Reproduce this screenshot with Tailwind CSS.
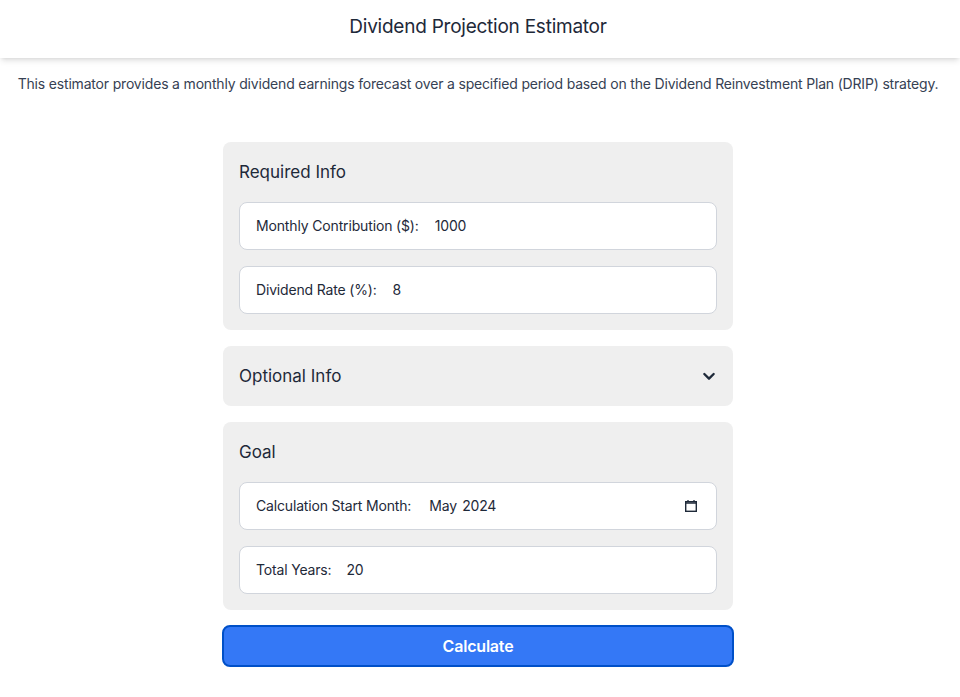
<!DOCTYPE html>
<html lang="en">
<head>
    <meta charset="UTF-8">
    <meta name="viewport" content="width=device-width, initial-scale=1.0">
    <title>Dividend Projection Estimator</title>
    <script src="https://cdn.jsdelivr.net/npm/@tailwindcss/browser@4"></script>
</head>
<body class="bg-white font-['Inter',sans-serif] text-gray-800">
    <!--Header-->
    <header class="h-[58px] flex items-center justify-center pr-1 pb-1 bg-white shadow-md">
        <h1 class="text-[19px] leading-7 tracking-[-0.24px] text-gray-800">Dividend Projection Estimator</h1>
    </header>

    <div class="pr-1">
        <p class="mt-4 text-sm leading-5 tracking-[-0.18px] text-center text-gray-700">This estimator provides a monthly dividend earnings forecast over a specified period based on the Dividend Reinvestment Plan (DRIP) strategy.</p>

        <!--Form-->
        <form class="w-[510px] mx-auto mt-[48px] flex flex-col gap-4">
            <section class="bg-[#efefef] rounded-lg p-4 flex flex-col gap-4">
                <h2 class="text-[17px] leading-7">Required Info</h2>
                <label class="h-12 flex items-center px-4 bg-white border border-gray-300 rounded-lg text-sm tracking-[-0.15px]">
                    <span class="mr-4">Monthly Contribution ($):</span>
                    <input type="number" value="1000" class="flex-1 outline-none [appearance:textfield]">
                </label>
                <label class="h-12 flex items-center px-4 bg-white border border-gray-300 rounded-lg text-sm tracking-[-0.17px]">
                    <span class="mr-4">Dividend Rate (%):</span>
                    <input type="number" value="8" class="flex-1 outline-none [appearance:textfield]">
                </label>
            </section>

            <section class="h-[60px] bg-[#efefef] rounded-lg px-4 flex items-center justify-between">
                <h2 class="text-[17px] leading-7">Optional Info</h2>
                <svg class="w-4 h-4 text-gray-800" fill="none" stroke="currentColor" viewBox="0 0 24 24" xmlns="http://www.w3.org/2000/svg">
                    <path stroke-linecap="round" stroke-linejoin="round" stroke-width="3.5" d="M5 9l7 7 7-7"></path>
                </svg>
            </section>

            <section class="bg-[#efefef] rounded-lg p-4 flex flex-col gap-4">
                <h2 class="text-[17px] leading-7">Goal</h2>
                <label class="h-12 flex items-center pl-4 pr-[19px] bg-white border border-gray-300 rounded-lg text-sm tracking-[-0.17px]">
                    <span class="mr-[18px]">Calculation Start Month:</span>
                    <input type="text" value="May 2024" class="flex-1 outline-none [word-spacing:1.5px]">
                    <svg class="w-3 h-3 text-gray-800" fill="none" stroke="currentColor" viewBox="0 0 12 12" xmlns="http://www.w3.org/2000/svg">
                        <rect x="0.7" y="1.7" width="10.6" height="9.6" stroke-width="1.4"></rect>
                        <path stroke-width="1.5" d="M1 3h10"></path>
                        <path stroke-width="1.3" d="M3 0v2M9 0v2"></path>
                    </svg>
                </label>
                <label class="h-12 flex items-center px-4 bg-white border border-gray-300 rounded-lg text-sm tracking-[-0.17px]">
                    <span class="mr-[15px]">Total Years:</span>
                    <input type="number" value="20" class="flex-1 outline-none [appearance:textfield]">
                </label>
            </section>

            <button type="button" class="h-[42px] -mx-px -mt-px bg-[#3478f6] border-2 border-[#0050c8] rounded-lg text-white font-semibold tracking-[-0.2px]">Calculate</button>
        </form>
    </div>
</body>
</html>
